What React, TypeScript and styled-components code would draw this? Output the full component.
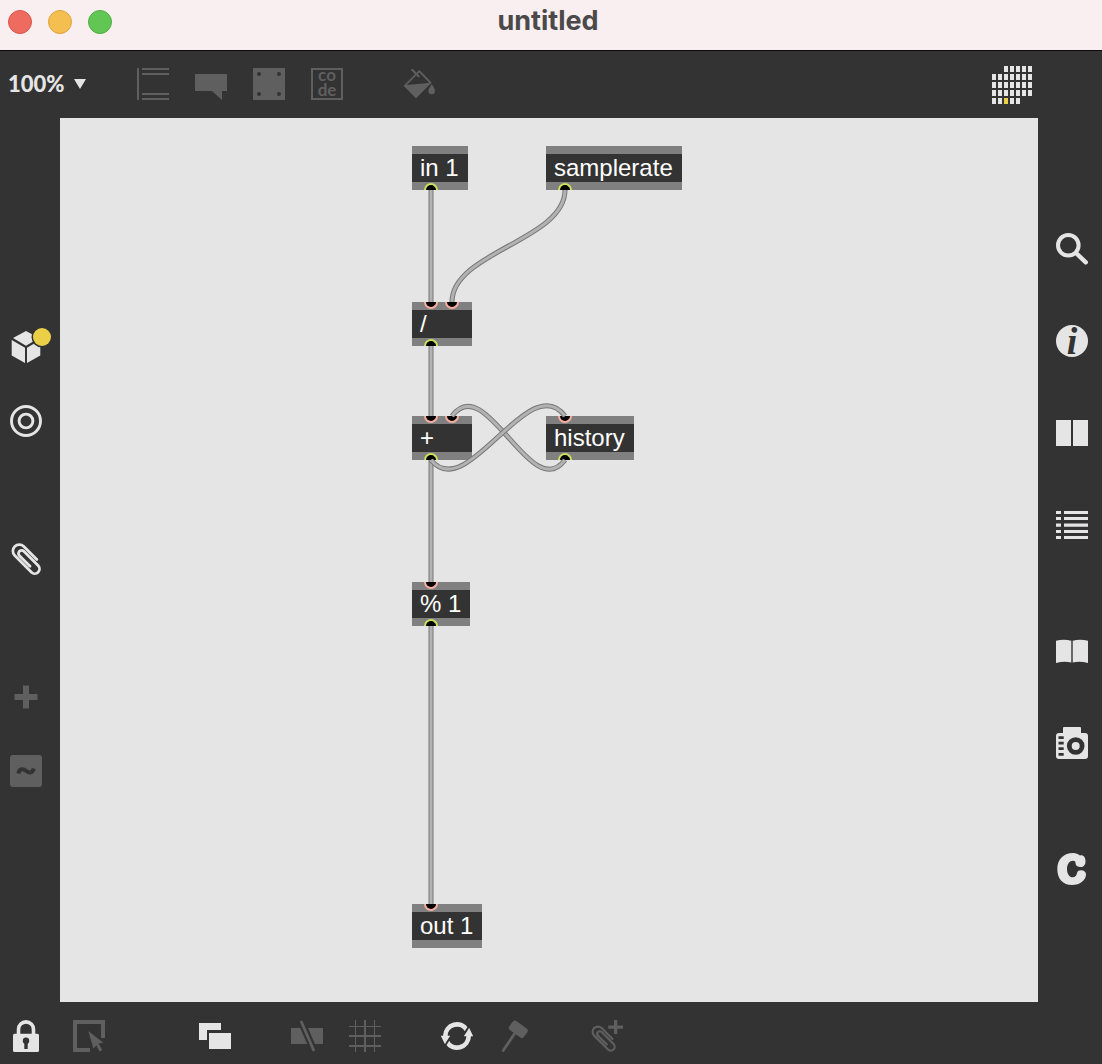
import React from "react";
import styled, { createGlobalStyle } from "styled-components";

const dark = "#333333";
const light = "#e5e5e5";
const dim = "#5f5f5f";
const yellow = "#ebd047";

const GlobalStyle = createGlobalStyle`
  *, *::before, *::after { box-sizing: border-box; }
  body { margin: 0; background: ${dark}; font-family: "Liberation Sans", Arial, sans-serif; }
`;

const Window = styled.div`
  display: flex;
  flex-direction: column;
  min-height: 100vh;
  background: ${dark};
`;

const TitleBar = styled.header`
  display: grid;
  grid-template-columns: 1fr auto 1fr;
  align-items: center;
  height: 51px;
  padding: 0 14px 6px 8px;
  background: #f9eff0;
  border-bottom: 1px solid #0c0c0c;
`;

const Lights = styled.div`
  display: flex;
  gap: 16px;
`;

const Light = styled.button<{ $fill: string; $edge: string }>`
  width: 24px;
  height: 24px;
  padding: 0;
  border: 1px solid ${(p) => p.$edge};
  border-radius: 50%;
  background: ${(p) => p.$fill};
`;

const Title = styled.h1`
  align-self: start;
  margin: 0;
  font: 700 27px/42px Inter, "Open Sans", sans-serif;
  color: #4b4949;
`;

const Toolbar = styled.div`
  display: flex;
  align-items: center;
  height: 67px;
  padding: 0 70px 1px 8px;
`;

const Zoom = styled.label`
  display: flex;
  align-items: center;
  width: 129px;
`;

const ZoomSelect = styled.select`
  appearance: none;
  width: 66px;
  margin: 0;
  padding: 0;
  border: 0;
  background: transparent;
  color: ${light};
  font: 900 22px/32px Lato, sans-serif;
`;

const Tools = styled.div`
  display: flex;
  gap: 26px;
`;

const ToolGroups = styled.div`
  display: flex;
  flex: 1;
  gap: 60px;
`;

const Body = styled.div`
  display: flex;
  flex: 1;
`;

const Rail = styled.nav<{ $right?: boolean }>`
  display: flex;
  flex-direction: column;
  justify-content: center;
  gap: ${(p) => (p.$right ? 94 : 106)}px;
  width: ${(p) => (p.$right ? 64 : 60)}px;
  padding: 0 0 2px ${(p) => (p.$right ? 18 : 10)}px;
`;

const RailGroup = styled.div<{ $gap: number }>`
  display: flex;
  flex-direction: column;
  gap: ${(p) => p.$gap}px;
`;

const IconButton = styled.button<{ $dim?: boolean }>`
  width: 32px;
  height: 32px;
  padding: 0;
  border: 0;
  background: transparent;
  color: ${(p) => (p.$dim ? dim : light)};

  svg {
    display: block;
    overflow: visible;
  }
`;

const MatrixButton = styled(IconButton)`
  width: 40px;
  height: 36px;
`;

const Footer = styled.footer`
  display: flex;
  gap: 60px;
  padding: 18px 10px 12px;
`;

const FooterStart = styled.div`
  display: flex;
  gap: 31px;
  margin-right: 34px;
`;

const Canvas = styled.main`
  position: relative;
  flex: 1;
  min-height: 860px;
  background: ${light};
`;

const Box = styled.div<{ $x: number; $y: number; $w: number }>`
  position: absolute;
  left: ${(p) => p.$x}px;
  top: ${(p) => p.$y}px;
  width: ${(p) => p.$w}px;
  padding: 0 8px;
  border: solid #808080;
  border-width: 8px 0;
  background: ${dark};
  color: #ffffff;
  font-size: 24px;
  line-height: 28px;
  white-space: nowrap;
`;

const Port = styled.span<{ $x: number; $out?: boolean }>`
  position: absolute;
  left: ${(p) => p.$x - 7}px;
  ${(p) => (p.$out ? "bottom" : "top")}: -8px;
  width: 14px;
  height: 7px;
  border: 2px solid ${(p) => (p.$out ? "#cfdf5c" : "#f7aea0")};
  ${(p) => (p.$out ? "border-bottom: 0; border-radius: 7px 7px 0 0;" : "border-top: 0; border-radius: 0 0 7px 7px;")}
  background: #000000;
`;

const Cables = styled.svg`
  position: absolute;
  inset: 0;
  width: 100%;
  height: 100%;
  pointer-events: none;
`;

type Node = { text: string; x: number; y: number; w: number; ins: number[]; outs: number[] };

const nodes: Node[] = [
  { text: "in 1", x: 352, y: 28, w: 56, ins: [], outs: [19] },
  { text: "samplerate", x: 486, y: 28, w: 136, ins: [], outs: [19] },
  { text: "/", x: 352, y: 184, w: 60, ins: [19, 40], outs: [19] },
  { text: "+", x: 352, y: 298, w: 60, ins: [19, 40], outs: [19] },
  { text: "history", x: 486, y: 298, w: 88, ins: [19], outs: [19] },
  { text: "% 1", x: 352, y: 464, w: 58, ins: [19], outs: [19] },
  { text: "out 1", x: 352, y: 786, w: 70, ins: [19], outs: [] },
];

const cables = [
  "M371 72V184",
  "M505 72C505 122 392 134 392 184",
  "M371 228V298",
  "M371 342V464",
  "M505 342C471 387 426 252 392 298",
  "M371 342C407 387 469 250 505 298",
  "M371 508V786",
];

const clip = "M8-7.3H-10.4A6.4 6.4 0 0 0-10.4 5.5H13.2A4.7 4.7 0 0 0 13.2-3.9H-7A3.1 3.1 0 0 0-7 2.3H8";

const icons: Record<string, React.ReactNode> = {
  frame: <path d="M0 0h2v32H0zM5 0h27v2H5zM5 5h27v2H5zM5 25h27v2H5zM5 30h27v2H5z" />,
  comment: <path d="M0 6h32v17h-5v9l-10-9H0z" />,
  panel: (
    <>
      <path d="M0 0h32v32H0z" />
      <g fill={dark}>
        <circle cx="6" cy="6" r="2" />
        <circle cx="26" cy="6" r="2" />
        <circle cx="6" cy="26" r="2" />
        <circle cx="26" cy="26" r="2" />
      </g>
    </>
  ),
  code: (
    <>
      <path d="M1 1h30v30H1z" fill="none" stroke="currentColor" strokeWidth="2" />
      <text fontFamily="Lato, sans-serif" fontWeight="700" fontSize="17" textAnchor="middle">
        <tspan x="16" y="13">co</tspan>
        <tspan x="16" y="28">de</tspan>
      </text>
    </>
  ),
  bucket: (
    <>
      <path d="M16.3 3.2 27.3 14.5 13 29 1.8 17.7z" fill="none" stroke="currentColor" strokeWidth="1.8" />
      <path d="M1 17.2 28 14.8 13 30z" />
      <path d="M9.4 2 15.6 8.2" stroke="currentColor" strokeWidth="2.2" strokeLinecap="round" />
      <path d="M28.7 16C30.5 19 32 20.8 32 23a3.3 3.3 0 0 1-6.6 0C25.4 20.8 27 19 28.7 16z" />
    </>
  ),
  cube: (
    <>
      <path d="M16 0 29 7 16 14.7 3 7zM1.7 9 15 16.7V32L1.7 24.5zM17 16.7 30.3 9V24.5L17 32z" />
      <circle cx="32" cy="6" r="10.5" fill={dark} />
      <circle cx="32" cy="6" r="9" fill={yellow} />
    </>
  ),
  rings: (
    <g fill="none" stroke="currentColor" strokeWidth="2.9">
      <circle cx="16" cy="16" r="14.5" />
      <circle cx="16" cy="16" r="6.9" />
    </g>
  ),
  clip: (
    <path d={clip} transform="translate(16 16) rotate(45)" fill="none" stroke="currentColor" strokeWidth="2.8" strokeLinecap="round" />
  ),
  plus: <path d="M13 4.500h6V13h8.500v6H19v8.500h-6V19H4.500v-6H13z" />,
  tilde: (
    <>
      <rect width="32" height="32" rx="3" />
      <path d="M8.300 18.500C9.500 13.300 13 13.300 16 15.800S22.500 18.500 23.700 13.500" fill="none" stroke={dark} strokeWidth="4" />
    </>
  ),
  search: (
    <g fill="none" stroke="currentColor">
      <circle cx="12.3" cy="12.3" r="10.3" strokeWidth="4" />
      <path d="M20 20 29.800 29.300" strokeWidth="4.4" strokeLinecap="round" />
    </g>
  ),
  info: (
    <>
      <circle cx="16" cy="16" r="16" />
      <text x="16" y="29" fill={dark} textAnchor="middle" fontFamily="Liberation Serif, serif" fontStyle="italic" fontWeight="700" fontSize="38">i</text>
    </>
  ),
  split: <path d="M0 3h15v26H0zM17 3h15v26H17z" />,
  list: <path d="M0 2h5v3H0zM8 2h24v3H8zM0 8h5v3H0zM8 8h24v3H8zM0 14.500h5v3.200H0zM8 14.500h24v3.200H8zM0 21h5v3H0zM8 21h24v3H8zM0 27h5v3H0zM8 27h24v3H8z" />,
  book: <path d="M0 5.800Q8 3.800 15.300 5.800V27.500Q8 26 0 28zM16.700 5.800Q24 3.800 32 5.800V28Q24 26 16.700 27.500z" />,
  camera: (
    <>
      <path d="M8 0h16q1 0 1 1v5h4q3 0 3 3v20q0 3-3 3H3q-3 0-3-3V9q0-3 3-3h4V1q0-1 1-1z" />
      <circle cx="19.7" cy="19" r="6.4" fill="none" stroke={dark} strokeWidth="4.8" />
      <path d="M2.500 9.300h5.200v2.700H2.500zM2.500 14.700h5.200v2.700H2.500zM2.500 20.300h5.200V23H2.500zM2.500 26h5.200v2.700H2.500z" fill={dark} />
    </>
  ),
  cLogo: (
    <path d="M17 0C20 0 22 1 24 2.500C27 1.500 29.500 4 29.500 8C29.500 12 27.500 14 24.700 14C21.500 14 19.500 12.500 19.500 10C19.500 8.500 18.800 7.700 17 7.700C13.500 7.700 11 11 11 16C11 21 13.500 24.300 16.500 24.300C19.500 24.300 20.500 22.500 21 20C21.500 18 23 17.300 25 17.300C28 17.300 30 19 30 21.500C30 27 24 32 16 32C7 32 1.300 26 1.300 16C1.300 6 8 0 17 0z" />
  ),
  lock: (
    <>
      <rect x="3" y="13.7" width="26" height="18.3" rx="1.5" />
      <path d="M8.500 15V9.400A7.500 7.500 0 0 1 23.500 9.400V15" fill="none" stroke="currentColor" strokeWidth="3.6" />
      <circle cx="16" cy="20.7" r="3.2" fill={dark} />
      <path d="M14.300 21h3.400v8h-3.400z" fill={dark} />
    </>
  ),
  select: (
    <>
      <path d="M32 18h-4V4H4v24h13v4H0V0h32z" />
      <path d="M15.300 11 30.300 22.700 25.500 23.500 29.300 30 26.500 31.500 23.300 25.200 20.500 28.700z" />
    </>
  ),
  layers: <path d="M0 3h22v7H8v10H0zM10 13h22v16H10z" />,
  mute: (
    <>
      <path d="M0 8h32v16H0z" />
      <path d="M9 -1.500 24 33" stroke={dark} strokeWidth="7" />
      <path d="M10 1 23 31" stroke="currentColor" strokeWidth="2.8" />
    </>
  ),
  grid: <path d="M6 0h1v32H6zM15 0h2v32h-2zM25 0h1v32h-1zM0 6h32v1H0zM0 15h32v2H0zM0 25h32v2H0z" />,
  cycle: (
    <>
      <g fill="none" stroke="currentColor" strokeWidth="4.7">
        <path d="M26.100 10.200A11.700 11.700 0 0 0 4.300 16" />
        <path d="M5.900 21.800A11.700 11.700 0 0 0 27.700 16" />
      </g>
      <path d="M21.800 16 28 6.300M10.200 16 4 25.700" stroke={dark} strokeWidth="1.8" />
      <path d="M22.800 16.200 28.200 8 32.200 16.200zM9.200 15.800 3.800 24 -.2 15.800z" />
    </>
  ),
  hammer: (
    <>
      <rect x="10.300" y="3.800" width="18" height="11" rx="2.6" transform="rotate(36 19.3 9.3)" />
      <path d="M16 13 4.200 30.500" stroke="currentColor" strokeWidth="2.8" strokeLinecap="round" />
    </>
  ),
  clipPlus: (
    <>
      <path d={clip} transform="translate(12.5 18.5) rotate(45) scale(.83)" fill="none" stroke="currentColor" strokeWidth="2.6" strokeLinecap="round" />
      <path d="M23 0h3.300v5.500H32v3.300h-5.700V14H23V8.800h-5.700V5.500H23z" />
    </>
  ),
};

function Tool({ icon, label, muted }: { icon: string; label: string; muted?: boolean }) {
  return (
    <IconButton type="button" aria-label={label} $dim={muted}>
      <svg width="32" height="32" viewBox="0 0 32 32" fill="currentColor" aria-hidden="true">
        {icons[icon]}
      </svg>
    </IconButton>
  );
}

// Columns that are filled in each row of the grid glyph: [first, last].
const matrixRows = [[2, 6], [0, 6], [0, 6], [0, 6], [0, 4]];

function Matrix() {
  return (
    <MatrixButton type="button" aria-label="Toolbars">
      <svg width="40" height="36" aria-hidden="true">
        {matrixRows.flatMap(([a, b], r) =>
          Array.from({ length: b - a + 1 }, (_, i) => a + i).map((c) => (
            <rect key={`${r}-${c}`} x={c * 6} y={r * 8} width="4" height="6" fill={r === 4 && c === 2 ? yellow : light} />
          )),
        )}
      </svg>
    </MatrixButton>
  );
}

export default function App() {
  return (
    <Window>
      <GlobalStyle />
      <TitleBar>
        <Lights>
          <Light type="button" aria-label="Close" $fill="#ed6b5f" $edge="#d9544a" />
          <Light type="button" aria-label="Minimize" $fill="#f5be50" $edge="#dca23b" />
          <Light type="button" aria-label="Full screen" $fill="#62c655" $edge="#4fae42" />
        </Lights>
        <Title>untitled</Title>
      </TitleBar>
      <Toolbar>
        <Zoom>
          <ZoomSelect aria-label="Zoom" defaultValue="100%">
            <option>50%</option>
            <option>100%</option>
            <option>200%</option>
          </ZoomSelect>
          <svg width="12" height="10" aria-hidden="true">
            <path d="M0 0h12L6 10z" fill={light} />
          </svg>
        </Zoom>
        <ToolGroups>
          <Tools>
            <Tool icon="frame" label="Object" muted />
            <Tool icon="comment" label="Comment" muted />
            <Tool icon="panel" label="Panel" muted />
            <Tool icon="code" label="Codebox" muted />
          </Tools>
          <Tool icon="bucket" label="Format" muted />
        </ToolGroups>
        <Matrix />
      </Toolbar>
      <Body>
        <Rail aria-label="Browsers">
          <RailGroup $gap={42}>
            <Tool icon="cube" label="Packages" />
            <Tool icon="rings" label="Devices" />
          </RailGroup>
          <Tool icon="clip" label="Snippets" />
          <RailGroup $gap={42}>
            <Tool icon="plus" label="Add" muted />
            <Tool icon="tilde" label="Audio" muted />
          </RailGroup>
        </Rail>
        <Canvas>
          {nodes.map((n) => (
            <Box key={n.text} $x={n.x} $y={n.y} $w={n.w}>
              {n.text}
              {n.ins.map((x) => <Port key={`in${x}`} $x={x} />)}
              {n.outs.map((x) => <Port key={`out${x}`} $x={x} $out />)}
            </Box>
          ))}
          <Cables aria-hidden="true" fill="none">
            {cables.map((d) => (
              <g key={d}>
                <path d={d} stroke="#777777" strokeWidth="5" />
                <path d={d} stroke="#b2b2b2" strokeWidth="3" />
              </g>
            ))}
          </Cables>
        </Canvas>
        <Rail $right aria-label="Sidebar">
          <RailGroup $gap={60}>
            <Tool icon="search" label="Search" />
            <Tool icon="info" label="Inspector" />
            <Tool icon="split" label="Reference" />
            <Tool icon="list" label="Console" />
          </RailGroup>
          <RailGroup $gap={60}>
            <Tool icon="book" label="Lessons" />
            <Tool icon="camera" label="Snapshots" />
          </RailGroup>
          <Tool icon="cLogo" label="Calendar" />
        </Rail>
      </Body>
      <Footer>
        <FooterStart>
          <Tool icon="lock" label="Lock" />
          <Tool icon="select" label="Operate while unlocked" muted />
        </FooterStart>
        <Tool icon="layers" label="Presentation" />
        <Tools>
          <Tool icon="mute" label="Mute" muted />
          <Tool icon="grid" label="Grid" muted />
        </Tools>
        <Tools>
          <Tool icon="cycle" label="Auto compile" />
          <Tool icon="hammer" label="Compile" muted />
        </Tools>
        <Tool icon="clipPlus" label="Add snippet" muted />
      </Footer>
    </Window>
  );
}
